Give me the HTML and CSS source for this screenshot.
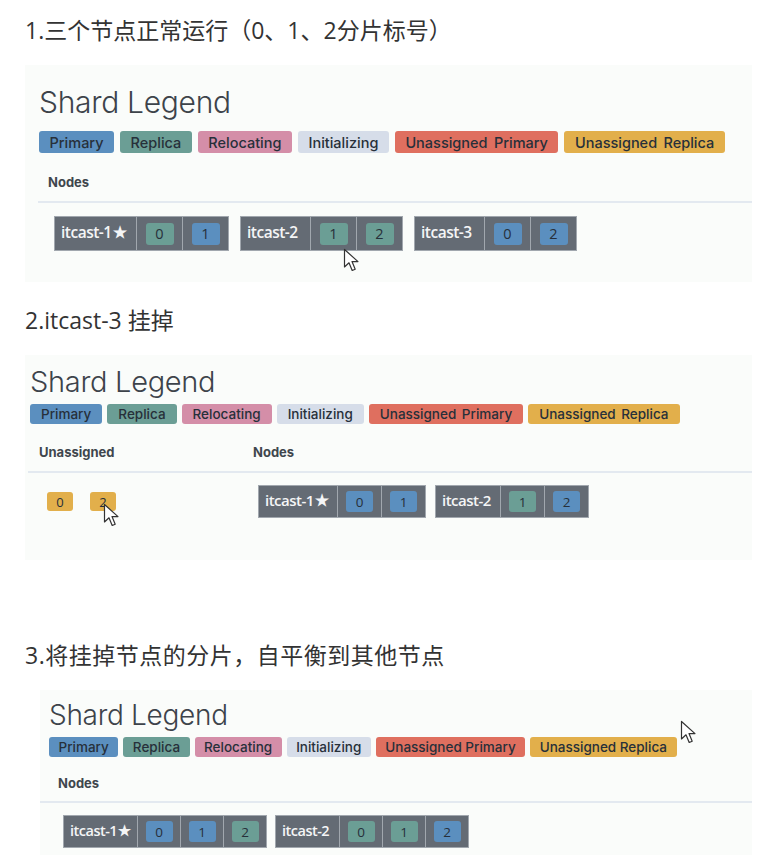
FILE: index.html
```html
<!DOCTYPE html>
<html lang="zh">
<head>
<meta charset="utf-8">
<link rel="stylesheet" href="styles.css">
</head>
<body>
<div class="page">
  <p class="step s1">1.三个节点正常运行（0、1、2分片标号）</p>
  <section class="panel p1">
    <h2 class="legend-title">Shard Legend</h2>
    <div class="legend">
      <span class="badge primary">Primary</span>
      <span class="badge replica">Replica</span>
      <span class="badge relocating">Relocating</span>
      <span class="badge initializing">Initializing</span>
      <span class="badge unprimary">Unassigned Primary</span>
      <span class="badge unreplica">Unassigned Replica</span>
    </div>
    <div class="head">
      <div class="col-head">Nodes</div>
    </div>
    <div class="body">
      <div class="nodes">
        <div class="node">
          <div class="label">itcast-1<span class="star">★</span></div>
          <div class="cell"><span class="shard replica">0</span></div>
          <div class="cell"><span class="shard primary">1</span></div>
        </div>
        <div class="node">
          <div class="label">itcast-2</div>
          <div class="cell"><span class="shard replica">1</span></div>
          <div class="cell"><span class="shard replica">2</span></div>
        </div>
        <div class="node">
          <div class="label">itcast-3</div>
          <div class="cell"><span class="shard primary">0</span></div>
          <div class="cell"><span class="shard primary">2</span></div>
        </div>
      </div>
    </div>
    <svg class="cursor c1" width="18" height="25" viewBox="0 0 18 25"><path d="M1.5 1.5 L1.5 19 L6 14.8 L9.2 22.5 L12.2 21.2 L9 13.6 L15 13.6 Z" fill="#fff" stroke="#333" stroke-width="1.2" stroke-linejoin="round"/></svg>
  </section>

  <p class="step s2">2.itcast-3 挂掉</p>
  <section class="panel p2">
    <h2 class="legend-title">Shard Legend</h2>
    <div class="legend">
      <span class="badge primary">Primary</span>
      <span class="badge replica">Replica</span>
      <span class="badge relocating">Relocating</span>
      <span class="badge initializing">Initializing</span>
      <span class="badge unprimary">Unassigned Primary</span>
      <span class="badge unreplica">Unassigned Replica</span>
    </div>
    <div class="head">
      <div class="col-head unassigned-col">Unassigned</div>
      <div class="col-head">Nodes</div>
    </div>
    <div class="body">
      <div class="unassigned">
        <span class="shard unreplica">0</span>
        <span class="shard unreplica">2</span>
      </div>
      <div class="nodes">
        <div class="node">
          <div class="label">itcast-1<span class="star">★</span></div>
          <div class="cell"><span class="shard primary">0</span></div>
          <div class="cell"><span class="shard primary">1</span></div>
        </div>
        <div class="node">
          <div class="label">itcast-2</div>
          <div class="cell"><span class="shard replica">1</span></div>
          <div class="cell"><span class="shard primary">2</span></div>
        </div>
      </div>
    </div>
    <svg class="cursor c2" width="18" height="25" viewBox="0 0 18 25"><path d="M1.5 1.5 L1.5 19 L6 14.8 L9.2 22.5 L12.2 21.2 L9 13.6 L15 13.6 Z" fill="#fff" stroke="#333" stroke-width="1.2" stroke-linejoin="round"/></svg>
  </section>

  <p class="step s3">3.将挂掉节点的分片，自平衡到其他节点</p>
  <section class="panel p3">
    <h2 class="legend-title">Shard Legend</h2>
    <div class="legend">
      <span class="badge primary">Primary</span>
      <span class="badge replica">Replica</span>
      <span class="badge relocating">Relocating</span>
      <span class="badge initializing">Initializing</span>
      <span class="badge unprimary">Unassigned Primary</span>
      <span class="badge unreplica">Unassigned Replica</span>
    </div>
    <div class="head">
      <div class="col-head">Nodes</div>
    </div>
    <div class="body">
      <div class="nodes">
        <div class="node">
          <div class="label">itcast-1<span class="star">★</span></div>
          <div class="cell"><span class="shard primary">0</span></div>
          <div class="cell"><span class="shard primary">1</span></div>
          <div class="cell"><span class="shard replica">2</span></div>
        </div>
        <div class="node">
          <div class="label">itcast-2</div>
          <div class="cell"><span class="shard replica">0</span></div>
          <div class="cell"><span class="shard replica">1</span></div>
          <div class="cell"><span class="shard primary">2</span></div>
        </div>
      </div>
    </div>
    <svg class="cursor c3" width="18" height="25" viewBox="0 0 18 25"><path d="M1.5 1.5 L1.5 19 L6 14.8 L9.2 22.5 L12.2 21.2 L9 13.6 L15 13.6 Z" fill="#fff" stroke="#333" stroke-width="1.2" stroke-linejoin="round"/></svg>
  </section>
</div>
</body>
</html>
```

FILE: styles.css
```css
* { box-sizing: border-box; }
html, body { margin: 0; padding: 0; background: #fff; }
body { width: 777px; height: 855px; overflow: hidden; }

.page { padding: 0 25px; }

.step {
  margin: 0;
  font-family: "Open Sans", "Noto Sans CJK SC", sans-serif;
  font-size: 23px;
  line-height: 28px;
  color: #333;
  white-space: nowrap;
}
.s1 { padding-top: 16px; height: 65px; }
.s2 { padding-top: 24px; height: 73px; }
.s3 { padding-top: 81px; height: 130px; letter-spacing: 0.5px; }

.panel {
  position: relative;
  background: #fafcfa;
  font-family: "Inter", "Liberation Sans", sans-serif;
}
.p1 { height: 217px; padding: 14px 0 0 14px; }
.p2 { height: 205px; padding: 8px 0 0 5px; }
.p3 { height: 165px; margin-left: 15px; padding: 6px 0 0 9px; }

.legend-title {
  margin: 0;
  font-weight: 300;
  color: #3d434a;
  letter-spacing: -0.3px;
}
.p1 .legend-title { font-size: 30px; line-height: 46px; }
.p2 .legend-title { font-size: 29px; line-height: 38px; }
.p3 .legend-title { font-size: 28px; line-height: 38px; }

.legend { display: flex; }
.p1 .legend { margin-top: 6px; gap: 6px; }
.p2 .legend { margin-top: 3px; gap: 5px; }
.p3 .legend { margin-top: 3px; gap: 5px; }

.badge {
  display: inline-flex;
  align-items: center;
  border-radius: 3px;
  color: #27303a;
  font-weight: 500;
  white-space: nowrap;
}
.p1 .badge { height: 22px; font-size: 14.5px; padding: 0 10.5px; word-spacing: 2.5px; }
.p2 .badge { height: 20px; font-size: 13.5px; padding: 0 11px; word-spacing: 2px; }
.p3 .badge { height: 20px; font-size: 13.5px; padding: 0 9.5px; }

.primary { background: #5b8fbf; }
.replica { background: #6b9e95; }
.relocating { background: #d48ea8; }
.initializing { background: #d6dde9; }
.unprimary { background: #df6f5f; }
.unreplica { background: #e2af4b; }

.head {
  display: flex;
  border-bottom: 2px solid #e3e9f0;
  font-weight: 700;
  color: #3f464d;
}
.col-head { font-size: 13px; line-height: 18px; }
.p1 .head { margin-left: -1px; padding: 20px 0 10px 10px; }
.p2 .head { margin-left: -2px; padding: 19px 0 10px 11px; }
.p3 .head { margin-left: -9px; padding: 17px 0 9px 18px; }
.unassigned-col { width: 214px; }

.body { display: flex; align-items: flex-start; }
.p1 .body { padding: 13px 0 0 15px; }
.p2 .body { padding: 12px 0 0 17px; }
.p3 .body { padding: 12px 0 0 14px; }

.unassigned { display: flex; gap: 17px; width: 211px; padding-top: 7px; }
.unassigned .shard { width: 26px; height: 19px; font-size: 13px; }

.nodes { display: flex; }
.p1 .nodes { gap: 11px; }
.p2 .nodes { gap: 9px; }
.p3 .nodes { gap: 8px; }

.node { display: flex; }
.label, .cell {
  background: #646b74;
  border: 1px solid #a1a7ae;
  display: flex;
  align-items: center;
  justify-content: center;
}
.cell { border-left: none; }
.label {
  color: #f4f5f6;
  font-family: "Open Sans", sans-serif;
  font-weight: 600;
  letter-spacing: -0.5px;
  padding: 0 5px 3px 6px;
  justify-content: flex-start;
  white-space: nowrap;
}
.star { font-size: 0.9em; margin-left: 1px; }
.p1 .label, .p1 .cell { height: 35px; }
.p1 .label { font-size: 15.5px; width: 83px; }
.p1 .cell { width: 46px; }
.p1 .node:nth-child(n+2) .label { width: 71px; }
.p2 .label, .p2 .cell, .p3 .label, .p3 .cell { height: 33px; }
.p2 .label { font-size: 15px; width: 80px; }
.p2 .node:nth-child(2) .label { width: 66px; }
.p2 .cell { width: 44px; }
.p3 .label { font-size: 14.5px; width: 75px; }
.p3 .node:nth-child(2) .label { width: 65px; }
.p3 .cell { width: 43px; }

.shard {
  display: inline-flex;
  align-items: center;
  justify-content: center;
  border-radius: 3px;
  color: #27303a;
  font-family: "Open Sans", sans-serif;
}
.p1 .cell .shard { width: 28px; height: 22px; font-size: 14.5px; }
.p2 .cell .shard, .p3 .cell .shard { width: 27px; height: 21px; font-size: 13.5px; }

.cursor { position: absolute; }
.c1 { left: 318px; top: 183px; }
.c2 { left: 78px; top: 148px; }
.c3 { left: 640px; top: 30px; }
```
